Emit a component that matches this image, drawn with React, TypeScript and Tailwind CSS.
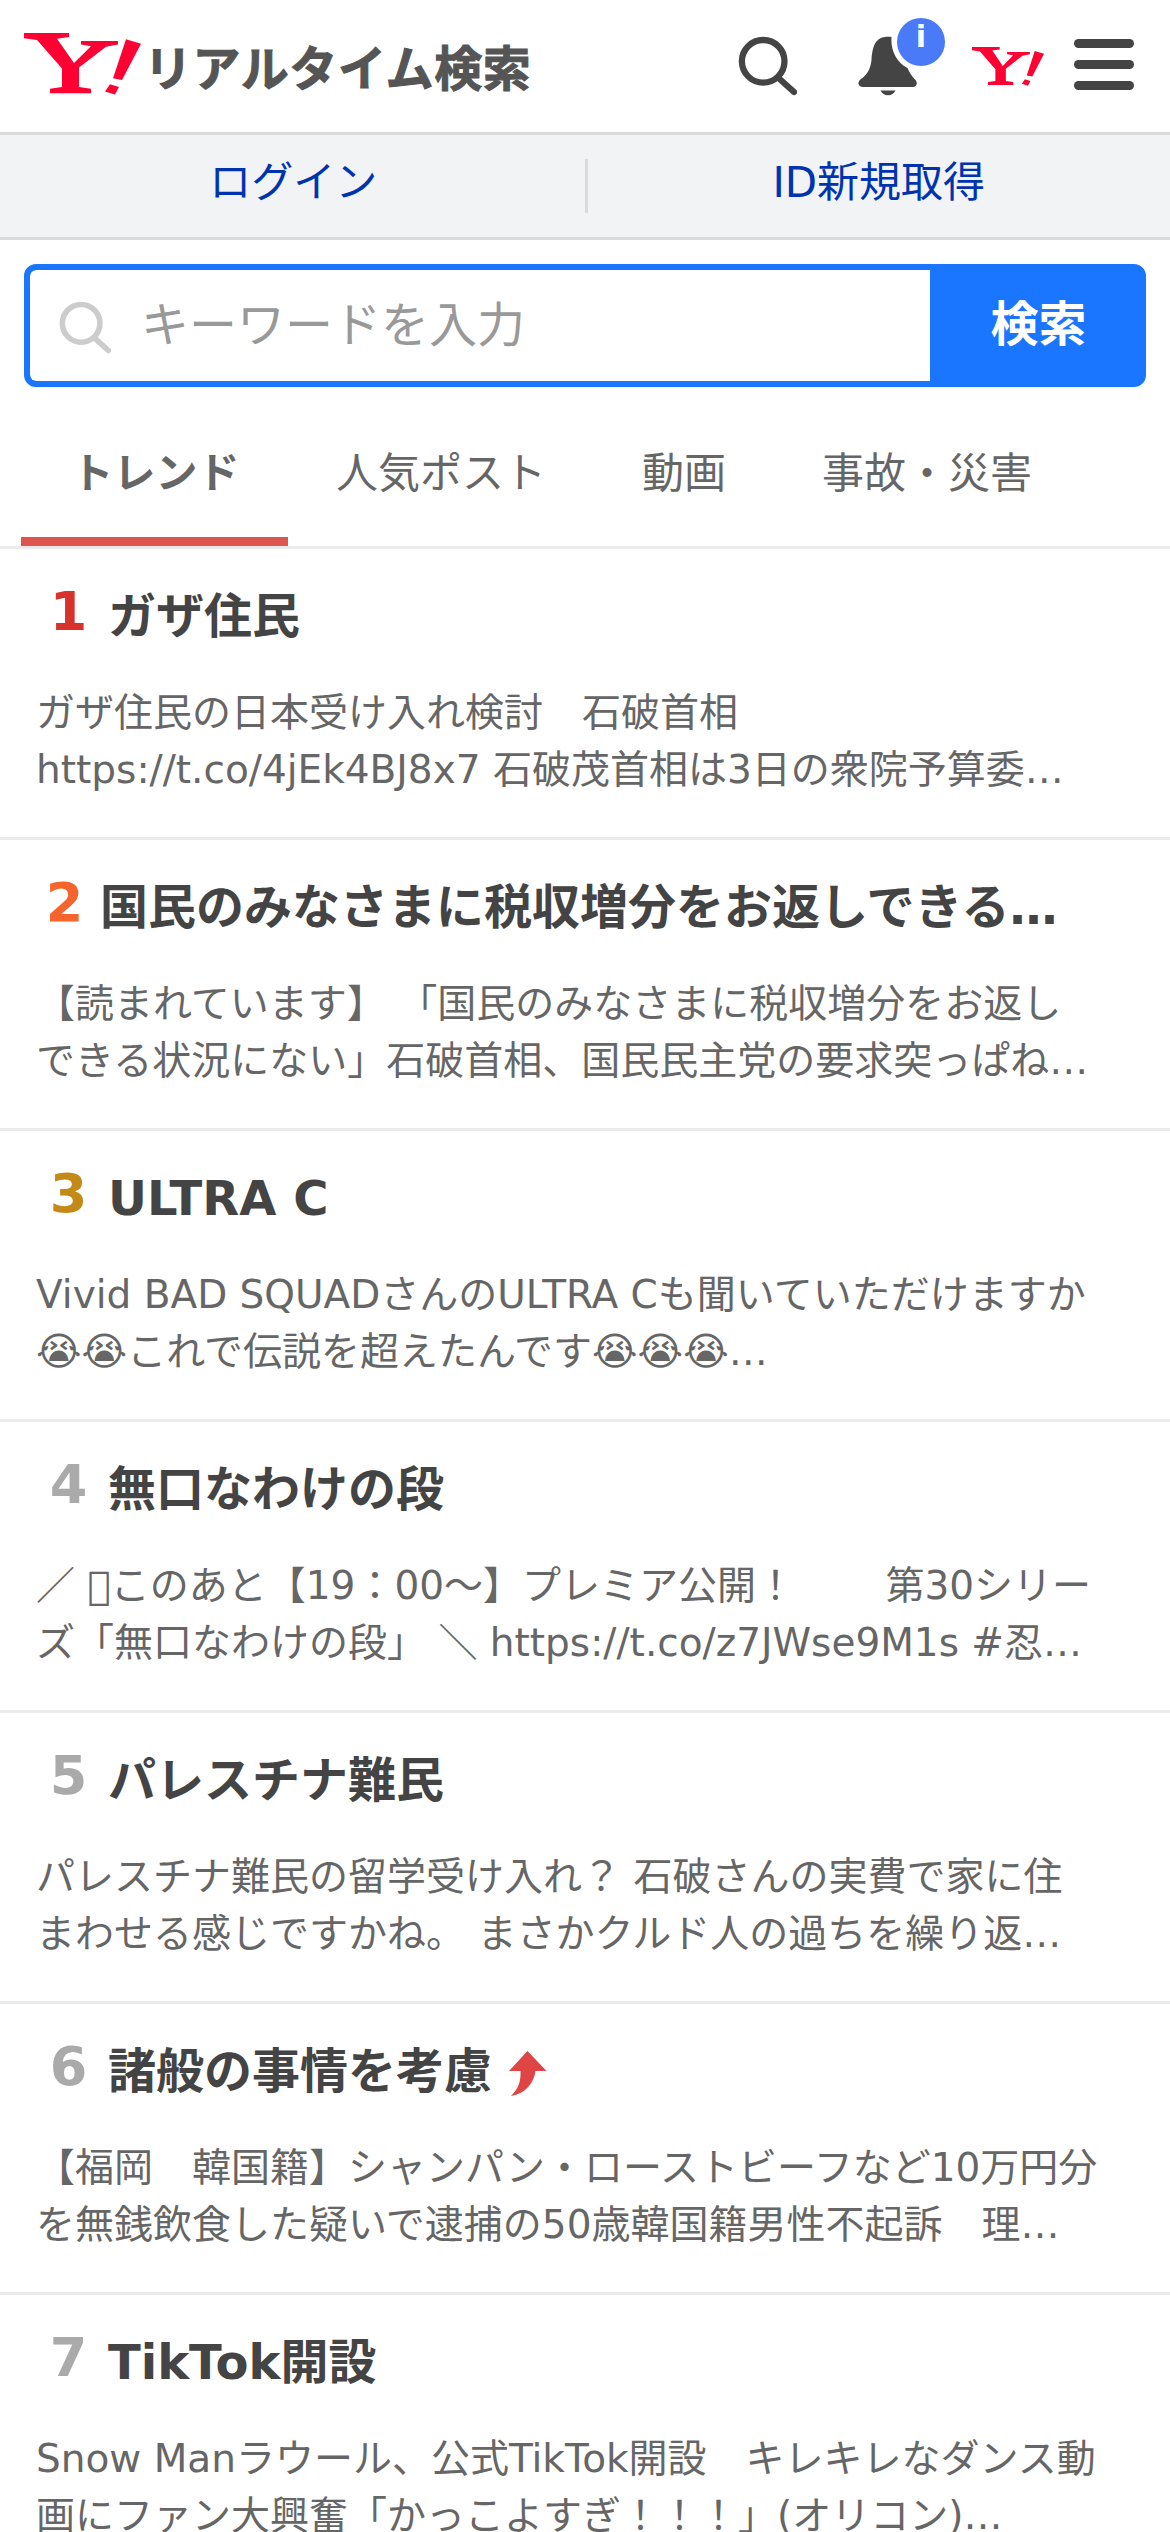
import { Fragment } from 'react'

type Trend = {
  rank: number
  title: string
  lines: string[]
  rising?: boolean
}

const TABS = ['トレンド', '人気ポスト', '動画', '事故・災害']

const TRENDS: Trend[] = [
  {
    rank: 1,
    title: 'ガザ住民',
    lines: ['ガザ住民の日本受け入れ検討　石破首相', 'https://t.co/4jEk4BJ8x7 石破茂首相は3日の衆院予算委…'],
  },
  {
    rank: 2,
    title: '国民のみなさまに税収増分をお返しできる…',
    lines: ['【読まれています】 「国民のみなさまに税収増分をお返し', 'できる状況にない」石破首相、国民民主党の要求突っぱね…'],
  },
  {
    rank: 3,
    title: 'ULTRA C',
    lines: ['Vivid BAD SQUADさんのULTRA Cも聞いていただけますか', '😭😭これで伝説を超えたんです😭😭😭…'],
  },
  {
    rank: 4,
    title: '無口なわけの段',
    lines: ['／ \u{10FFFD}このあと【19：00〜】プレミア公開！　　 第30シリー', 'ズ「無口なわけの段」 ＼ https://t.co/z7JWse9M1s #忍…'],
  },
  {
    rank: 5,
    title: 'パレスチナ難民',
    lines: ['パレスチナ難民の留学受け入れ？ 石破さんの実費で家に住', 'まわせる感じですかね。 まさかクルド人の過ちを繰り返…'],
  },
  {
    rank: 6,
    title: '諸般の事情を考慮',
    rising: true,
    lines: ['【福岡　韓国籍】シャンパン・ローストビーフなど10万円分', 'を無銭飲食した疑いで逮捕の50歳韓国籍男性不起訴　理…'],
  },
  {
    rank: 7,
    title: 'TikTok開設',
    lines: ['Snow Manラウール、公式TikTok開設　キレキレなダンス動', '画にファン大興奮「かっこよすぎ！！！」(オリコン)…'],
  },
]

const RANK_COLORS: Record<number, string> = {
  1: 'text-[#d7322c]',
  2: 'text-[#f5642d]',
  3: 'text-[#c48a18]',
}

function YahooMark({ className }: { className: string }) {
  return (
    <svg viewBox="0 0 117 70" className={className} fill="#ff0033" preserveAspectRatio="none" aria-label="Yahoo">
      <path d="M0 0H45V4.5L33 6.5L50 34L67 15L57 13V9H94V13L82 15.500L55 39V61L67 63V68H26V63L38 61V40L13 8L0 6Z" />
      <path d="M102 7L117 12L98 53L89 51Z" />
      <path d="M86 58L95 61L91 69.500L81 66Z" />
    </svg>
  )
}

function Magnifier({ className }: { className: string }) {
  return (
    <svg
      viewBox="0 0 60 60"
      className={className}
      fill="none"
      stroke="currentColor"
      strokeWidth="6.3"
      strokeLinecap="round"
    >
      <circle cx="26.2" cy="25.3" r="21.3" />
      <path d="M41.500 42L57 56" />
    </svg>
  )
}

function Bell() {
  return (
    <svg viewBox="0 0 60 60" className="h-[60px] w-[60px]" fill="#444">
      <path d="M30 0.800C31.500 0.800 32.500 0.900 33.500 1C32.500 14 38 26 49.500 32C51.500 37 53.500 39.500 56.500 43C61 47 58 51 55 51H4.500C0.500 51 -1.500 46.500 3 43C9 39 12.500 33 13.500 24C14.500 9 18 0.800 30 0.800Z" />
      <path d="M22.500 54.500H37.500C36 57.500 33.500 59.300 30 59.300S24 57.500 22.500 54.500Z" />
    </svg>
  )
}

function Header() {
  return (
    <header className="flex h-[135px] items-start border-b-[3px] border-[#d8dadc]">
      <div className="flex items-start pl-6 pt-[33px]">
        <YahooMark className="h-[62px] w-[117px]" />
        <h1 className="ml-[3px] mt-[8px] text-[48px] leading-[56px] font-bold tracking-[0.6px] text-[#555] [-webkit-text-stroke:1px_#555]">
          リアルタイム検索
        </h1>
      </div>
      <nav className="ml-auto flex items-start pr-[36px] text-[#444]">
        <Magnifier className="mr-[61px] mt-[36px] h-[60px] w-[60px]" />
        <div className="relative mr-[54px] mt-[36px]">
          <Bell />
          <span className="absolute -top-[18px] left-[39px] flex h-12 w-12 justify-center rounded-full bg-[#4a7af8] text-[30px] leading-[38px] font-bold text-white">
            i
          </span>
        </div>
        <YahooMark className="mr-[30px] mt-[47px] h-[39px] w-[72px]" />
        <div className="mt-[39px] flex w-[60px] flex-col gap-[12px]">
          <span className="h-[9px] rounded-full bg-[#444]" />
          <span className="h-[9px] rounded-full bg-[#444]" />
          <span className="h-[9px] rounded-full bg-[#444]" />
        </div>
      </nav>
    </header>
  )
}

function AccountBar() {
  return (
    <div className="flex h-[105px] items-center border-b-[3px] border-[#d8dadc] bg-[#f1f3f5] pl-[2px] text-[42px] leading-[60px] text-[#0033b0]">
      <a className="flex-1 pb-[6px] text-center">ログイン</a>
      <span className="h-[54px] w-[3px] bg-[#d8dadc]" />
      <a className="flex-1 pb-[6px] text-center">ID新規取得</a>
    </div>
  )
}

function SearchBox() {
  return (
    <div className="mx-6 mt-6 flex h-[123px] overflow-hidden rounded-[12px] border-[6px] border-[#1a75ff] bg-[#1a75ff]">
      <div className="flex w-[900px] items-center rounded-l-[6px] bg-white pl-[28px]">
        <Magnifier className="mt-[3px] h-[53px] w-[53px] text-[#ccc]" />
        <span className="ml-[30px] pb-[2px] text-[48px] leading-[72px] text-[#999]">キーワードを入力</span>
      </div>
      <button type="button" className="flex-1 pb-[3px] pl-[7px] text-[48px] leading-[72px] font-bold text-white">
        検索
      </button>
    </div>
  )
}

function Tabs() {
  return (
    <div className="flex h-[162px] border-b-[3px] border-[#ebebeb] pl-[21px] text-[42px] text-[#666]">
      {TABS.map((tab, i) => (
        <div
          key={tab}
          className={
            i === 0
              ? 'flex h-[159px] w-[267px] items-center justify-center border-b-[9px] border-[#de5550] pt-[22px] pl-[2px] font-bold'
              : 'flex h-[159px] items-center px-[48px] pt-[13px]'
          }
        >
          {tab}
        </div>
      ))}
    </div>
  )
}

function TrendRow({ trend }: { trend: Trend }) {
  return (
    <li className="h-[291px] border-b-[3px] border-[#ebebeb] px-9 pt-[33px]">
      <div className="flex h-[69px] items-center">
        <span
          className={`pb-[10px] pl-[2px] text-center text-[54px] leading-[63px] font-bold ${
            trend.rank === 2 ? 'w-[55px]' : 'w-[63px]'
          } ${RANK_COLORS[trend.rank] ?? 'text-[#aaa]'}`}
        >
          {trend.rank}
        </span>
        <h2 className="ml-[9px] text-[48px] leading-[69px] font-bold whitespace-nowrap text-[#444]">{trend.title}</h2>
        {trend.rising && (
          <svg viewBox="0 0 38 45" className="ml-[17px] mt-[4px] h-[45px] w-[38px]" fill="#e04545">
            <path d="M18.500 0L37.500 20H26.500C25 32 16 43 2 45C9 38 12 31 11.500 20H0Z" />
          </svg>
        )}
      </div>
      <p className="mt-[33px] text-[39px] leading-[57px] whitespace-pre text-[#666]">
        {trend.lines.map((line, i) => (
          <Fragment key={i}>
            {i > 0 && <br />}
            {line}
          </Fragment>
        ))}
      </p>
    </li>
  )
}

export default function App() {
  return (
    <main
      lang="ja"
      className="h-[2532px] w-[1170px] overflow-hidden bg-white font-['DejaVu_Sans','Noto_Sans_CJK_JP',sans-serif]"
    >
      <Header />
      <AccountBar />
      <SearchBox />
      <Tabs />
      <ul>
        {TRENDS.map((trend) => (
          <TrendRow key={trend.rank} trend={trend} />
        ))}
      </ul>
    </main>
  )
}
